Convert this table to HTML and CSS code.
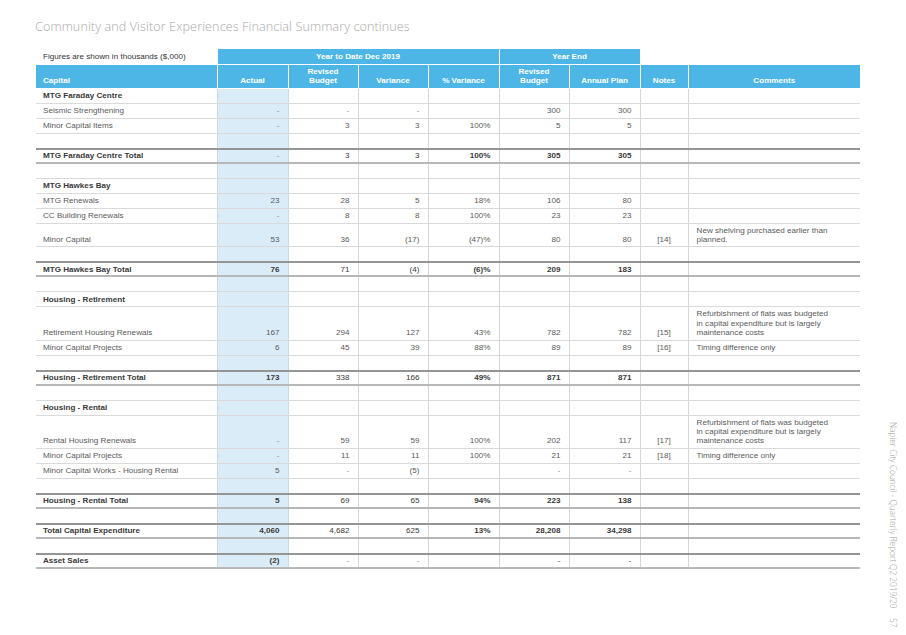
FILE: index.html
```html
<!DOCTYPE html>
<html>
<head>
<meta charset="utf-8">
<link rel="stylesheet" href="styles.css">
</head>
<body>
<div class="page">
  <div class="main">
    <h1 class="title">Community and Visitor Experiences Financial Summary continues</h1>
    <table class="fin">
      <colgroup>
        <col class="c-cap"><col class="c-num"><col class="c-num2"><col class="c-num2"><col class="c-num"><col class="c-num2"><col class="c-num"><col class="c-notes"><col class="c-comm">
      </colgroup>
      <thead>
        <tr class="h1">
          <th class="figures">Figures are shown in thousands ($,000)</th>
          <th class="band" colspan="4">Year to Date Dec 2019</th>
          <th class="band" colspan="2">Year End</th>
          <th class="none" colspan="2"></th>
        </tr>
        <tr class="h2">
          <th class="cap">Capital</th>
          <th>Actual</th>
          <th>Revised<br>Budget</th>
          <th>Variance</th>
          <th>% Variance</th>
          <th>Revised<br>Budget</th>
          <th>Annual Plan</th>
          <th>Notes</th>
          <th>Comments</th>
        </tr>
      </thead>
      <tbody>
        <tr class="sec"><td>MTG Faraday Centre</td><td class="act"></td><td></td><td></td><td></td><td></td><td></td><td></td><td></td></tr>
        <tr><td>Seismic Strengthening</td><td class="act dash">-</td><td class="dash">-</td><td class="dash">-</td><td></td><td>300</td><td>300</td><td></td><td></td></tr>
        <tr><td>Minor Capital Items</td><td class="act dash">-</td><td>3</td><td>3</td><td>100%</td><td>5</td><td>5</td><td></td><td></td></tr>
        <tr class="blank"><td></td><td class="act"></td><td></td><td></td><td></td><td></td><td></td><td></td><td></td></tr>
        <tr class="tot"><td>MTG Faraday Centre Total</td><td class="act dash">-</td><td>3</td><td>3</td><td>100%</td><td>305</td><td>305</td><td></td><td></td></tr>
        <tr class="blank"><td></td><td class="act"></td><td></td><td></td><td></td><td></td><td></td><td></td><td></td></tr>
        <tr class="sec"><td>MTG Hawkes Bay</td><td class="act"></td><td></td><td></td><td></td><td></td><td></td><td></td><td></td></tr>
        <tr><td>MTG Renewals</td><td class="act">23</td><td>28</td><td>5</td><td>18%</td><td>106</td><td>80</td><td></td><td></td></tr>
        <tr><td>CC Building Renewals</td><td class="act dash">-</td><td>8</td><td>8</td><td>100%</td><td>23</td><td>23</td><td></td><td></td></tr>
        <tr><td>Minor Capital</td><td class="act">53</td><td>36</td><td>(17)</td><td>(47)%</td><td>80</td><td>80</td><td class="note">[14]</td><td class="comm">New shelving purchased earlier than<br>planned.</td></tr>
        <tr class="blank"><td></td><td class="act"></td><td></td><td></td><td></td><td></td><td></td><td></td><td></td></tr>
        <tr class="tot"><td>MTG Hawkes Bay Total</td><td class="act">76</td><td>71</td><td>(4)</td><td>(6)%</td><td>209</td><td>183</td><td></td><td></td></tr>
        <tr class="blank"><td></td><td class="act"></td><td></td><td></td><td></td><td></td><td></td><td></td><td></td></tr>
        <tr class="sec"><td>Housing - Retirement</td><td class="act"></td><td></td><td></td><td></td><td></td><td></td><td></td><td></td></tr>
        <tr><td>Retirement Housing Renewals</td><td class="act">167</td><td>294</td><td>127</td><td>43%</td><td>782</td><td>782</td><td class="note">[15]</td><td class="comm">Refurbishment of flats was budgeted<br>in capital expenditure but is largely<br>maintenance costs</td></tr>
        <tr><td>Minor Capital Projects</td><td class="act">6</td><td>45</td><td>39</td><td>88%</td><td>89</td><td>89</td><td class="note">[16]</td><td class="comm">Timing difference only</td></tr>
        <tr class="blank"><td></td><td class="act"></td><td></td><td></td><td></td><td></td><td></td><td></td><td></td></tr>
        <tr class="tot"><td>Housing - Retirement Total</td><td class="act">173</td><td>338</td><td>166</td><td>49%</td><td>871</td><td>871</td><td></td><td></td></tr>
        <tr class="blank"><td></td><td class="act"></td><td></td><td></td><td></td><td></td><td></td><td></td><td></td></tr>
        <tr class="sec"><td>Housing - Rental</td><td class="act"></td><td></td><td></td><td></td><td></td><td></td><td></td><td></td></tr>
        <tr><td>Rental Housing Renewals</td><td class="act dash">-</td><td>59</td><td>59</td><td>100%</td><td>202</td><td>117</td><td class="note">[17]</td><td class="comm">Refurbishment of flats was budgeted<br>in capital expenditure but is largely<br>maintenance costs</td></tr>
        <tr><td>Minor Capital Projects</td><td class="act dash">-</td><td>11</td><td>11</td><td>100%</td><td>21</td><td>21</td><td class="note">[18]</td><td class="comm">Timing difference only</td></tr>
        <tr><td>Minor Capital Works - Housing Rental</td><td class="act">5</td><td class="dash">-</td><td>(5)</td><td></td><td class="dash">-</td><td class="dash">-</td><td></td><td></td></tr>
        <tr class="blank"><td></td><td class="act"></td><td></td><td></td><td></td><td></td><td></td><td></td><td></td></tr>
        <tr class="tot"><td>Housing - Rental Total</td><td class="act">5</td><td>69</td><td>65</td><td>94%</td><td>223</td><td>138</td><td></td><td></td></tr>
        <tr class="blank"><td></td><td class="act"></td><td></td><td></td><td></td><td></td><td></td><td></td><td></td></tr>
        <tr class="tot"><td>Total Capital Expenditure</td><td class="act">4,060</td><td>4,682</td><td>625</td><td>13%</td><td>28,208</td><td>34,298</td><td></td><td></td></tr>
        <tr class="blank"><td></td><td class="act"></td><td></td><td></td><td></td><td></td><td></td><td></td><td></td></tr>
        <tr class="tot"><td>Asset Sales</td><td class="act">(2)</td><td class="dash">-</td><td class="dash">-</td><td></td><td class="dash">-</td><td class="dash">-</td><td></td><td></td></tr>
      </tbody>
    </table>
  </div>
  <aside class="side">
    <span class="side-text">Napier City Council - Quarterly Report Q2 2019/20</span>
    <span class="side-page">57</span>
  </aside>
</div>
</body>
</html>
```

FILE: styles.css
```css
html, body {
  margin: 0;
  padding: 0;
  background: #ffffff;
}

.page {
  display: flex;
  width: 906px;
  height: 635px;
  overflow: hidden;
}

.main {
  padding: 19px 0 0 36px;
  width: 824px;
}

.title {
  margin: 0 0 14px -1px;
  font-family: "Open Sans", "DejaVu Sans", sans-serif;
  font-weight: 300;
  font-size: 12.6px;
  line-height: 16px;
  color: #a9a9a9;
  letter-spacing: 0.1px;
}

.fin {
  border-collapse: collapse;
  table-layout: fixed;
  width: 824px;
  font-family: "Liberation Sans", Arial, sans-serif;
  font-size: 8.1px;
  color: #5a5a5a;
}

.c-cap { width: 181px; }
.c-num { width: 71px; }
.c-num2 { width: 70px; }
.c-notes { width: 48px; }
.c-comm { width: 172px; }

.fin th {
  font-weight: bold;
  color: #ffffff;
  background: #4db6e6;
  border: 1px solid #ffffff;
  padding: 0 4px;
  line-height: 9px;
  text-align: center;
}

.h1 { height: 15px; }
.h1 th { border-top: none; }
.h1 .figures {
  background: #ffffff;
  color: #333333;
  font-weight: normal;
  text-align: left;
  padding-left: 7px;
  border-left: none;
  white-space: nowrap;
}
.h1 .none {
  background: #ffffff;
  border: none;
}

.h2 { height: 24px; }
.h2 th {
  vertical-align: bottom;
  padding-bottom: 3px;
}
.h2 th.cap {
  text-align: left;
  padding-left: 7px;
  border-left: none;
}
.h2 th:last-child { border-right: none; }

.fin td {
  height: 10px;
  padding: 2px 8px 2px 8px;
  line-height: 9.4px;
  text-align: right;
  vertical-align: bottom;
  border-bottom: 1px solid #dadada;
  border-left: 1px solid #d6d6d6;
  white-space: nowrap;
}

.fin td:first-child {
  text-align: left;
  padding-left: 7px;
  border-left: none;
}

.fin td.act {
  background: #dbecf9;
  border-left: 1px solid #c9d9e6;
  border-right: 1px solid #c9d9e6;
}

.fin td.note { text-align: center; padding: 2px 2px; }
.fin td.comm { text-align: left; }

.fin td.dash { color: #8a8a8a; }

.sec td:first-child {
  font-weight: bold;
  color: #3a3a3a;
}

.tot td {
  height: 10px;
  padding-top: 1px;
  padding-bottom: 1px;
  border-top: 2px solid #959595;
  border-bottom: 2px solid #b8b8b8;
  color: #3a3a3a;
}
.tot td:first-child,
.tot td.act,
.tot td:nth-child(5),
.tot td:nth-child(6),
.tot td:nth-child(7) {
  font-weight: bold;
}
.tot td.act.dash { font-weight: normal; color: #8a8a8a; }

.side {
  margin-left: 28px;
  display: flex;
  flex-direction: column;
  justify-content: flex-end;
  align-items: center;
  padding-bottom: 8px;
  width: 10px;
}

.side-text, .side-page {
  writing-mode: vertical-rl;
  font-family: "Open Sans", "DejaVu Sans", sans-serif;
  font-weight: 300;
  font-size: 8.3px;
  color: #a0a0a0;
  white-space: nowrap;
}

.side-page { margin-top: 9px; }
```
